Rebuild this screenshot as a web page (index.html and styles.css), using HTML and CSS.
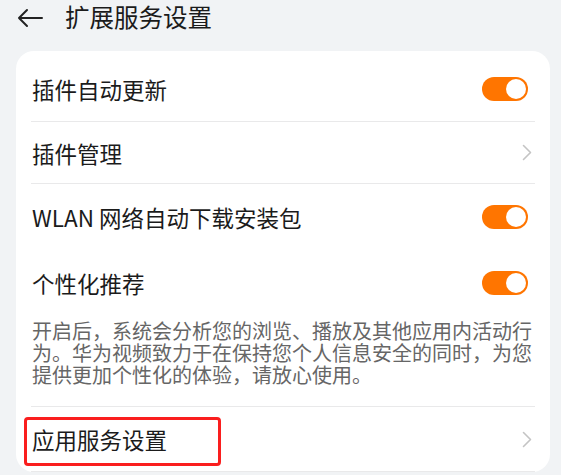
FILE: index.html
```html
<!DOCTYPE html>
<html lang="zh-CN">
<head>
<meta charset="utf-8">
<title>扩展服务设置</title>
<link rel="stylesheet" href="styles.css">
</head>
<body>
  <header class="topbar">
    <svg class="back" width="26" height="20" viewBox="0 0 26 20">
      <path d="M10 2 L2 10 L10 18 M2 10 H25" fill="none" stroke="#222" stroke-width="2" stroke-linecap="round" stroke-linejoin="round"/>
    </svg>
    <h1 class="title">扩展服务设置</h1>
  </header>

  <div class="card">
    <div class="row row-first divided">
      <span class="label">插件自动更新</span>
      <span class="switch on"><span class="knob"></span></span>
    </div>
    <div class="row row-nav divided">
      <span class="label">插件管理</span>
      <svg class="chevron" width="10" height="17" viewBox="0 0 10 17"><path d="M1.5 1.5 L8.5 8.5 L1.5 15.5" fill="none" stroke="#c4c4c4" stroke-width="1.6" stroke-linecap="round" stroke-linejoin="round"/></svg>
    </div>
    <div class="row">
      <span class="label">WLAN 网络自动下载安装包</span>
      <span class="switch on"><span class="knob"></span></span>
    </div>
    <div class="row">
      <span class="label">个性化推荐</span>
      <span class="switch on"><span class="knob"></span></span>
    </div>
    <p class="desc divided">开启后，系统会分析您的浏览、播放及其他应用内活动行为。华为视频致力于在保持您个人信息安全的同时，为您提供更加个性化的体验，请放心使用。</p>
    <div class="row row-last divided">
      <span class="label">应用服务设置</span>
      <svg class="chevron" width="10" height="17" viewBox="0 0 10 17"><path d="M1.5 1.5 L8.5 8.5 L1.5 15.5" fill="none" stroke="#c4c4c4" stroke-width="1.6" stroke-linecap="round" stroke-linejoin="round"/></svg>
      <span class="highlight"></span>
    </div>
  </div>
</body>
</html>
```

FILE: styles.css
```css
* { box-sizing: border-box; }

html, body {
  margin: 0;
  padding: 0;
  background: #f1f3f5;
  font-family: "Noto Sans CJK SC", "Noto Sans", sans-serif;
  color: #1b1b1b;
  overflow: hidden;
}

.topbar {
  height: 34px;
  margin-bottom: 17px;
  display: flex;
  align-items: center;
  padding-left: 17px;
}

.back {
  display: block;
  margin-top: 1px;
}

.title {
  margin: 0 0 0 22px;
  font-size: 24.5px;
  font-weight: 400;
  line-height: 34px;
  color: #1b1b1b;
}

.card {
  margin: 0 11px 0 16px;
  background: #ffffff;
  border-radius: 18px;
  padding: 5px 15px 0 15px;
}

.row {
  position: relative;
  display: flex;
  align-items: center;
  justify-content: space-between;
  height: 66px;
}

.row-nav { height: 62px; }
.row-last { height: 65px; }

.divided { border-bottom: 1px solid #e9e9ea; }

.label {
  font-size: 22.5px;
  line-height: 30px;
  padding-left: 1px;
}

.switch {
  position: relative;
  width: 46px;
  height: 24px;
  border-radius: 12px;
  margin-right: 7px;
  background: #ff7500;
}

.switch .knob {
  position: absolute;
  top: 2px;
  right: 2px;
  width: 20px;
  height: 20px;
  border-radius: 50%;
  background: #ffffff;
}

.chevron {
  display: block;
  margin-right: 3px;
}

.desc {
  margin: 0;
  padding: 4px 0 20px 1px;
  font-size: 20px;
  line-height: 22px;
  color: #666666;
}

.highlight {
  position: absolute;
  left: -7px;
  top: 10px;
  width: 197px;
  height: 49px;
  border: 3px solid #fa1e1e;
  border-radius: 4px;
}
```
